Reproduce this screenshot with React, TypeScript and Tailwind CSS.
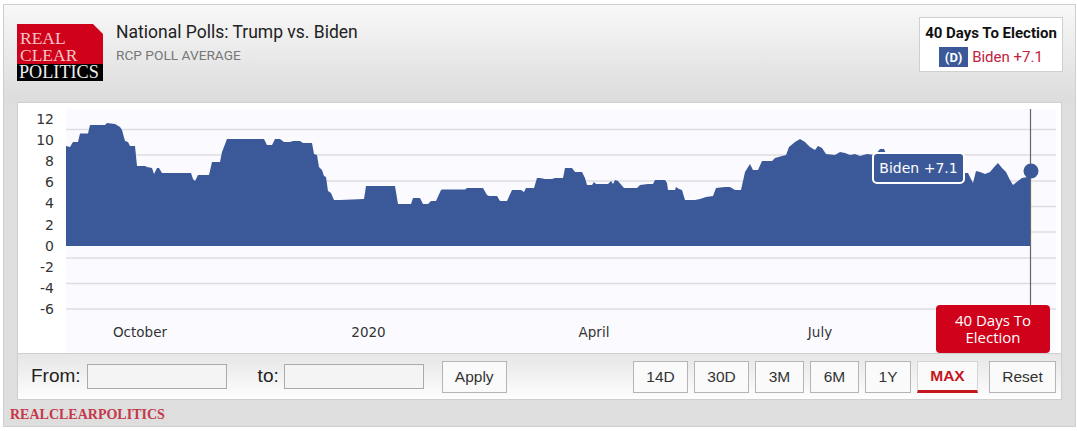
const AREA = "66,146 70,147 73,142 78,142 80,133.5 88,133.5 90,125 105,125 107,123 115,124 120,127 122,130 125,141 128,142 130,146 135,146 137,166 145,166 147,167 152,168 154,174 157,168 159,168 162,173 191,173 193,179 195,181 198,175 209,175 212,162 220,162 222,152 227,139 264,139 267,145 272,145 275,139 280,139 284,142 290,142 293,141 300,141 303,143 312,143 314,154 317,155 319,167 322,170 324,176 326,177 328,191 331,193 334,200 340,200 364,199 366,186 395,186 398,204 411,204 413,198 420,198 423,204 428,204 431,201 436,201 441,190 442,189.5 465,189.5 467,188 483,188 487,195 489,196 497,196 500,201 507,201 512,190 521,190 524,192 526,188 534,188 537,178 540,178 545,179 552,179 555,178 563,178 565,168 572,168 575,172 582,172 585,178 587,185 592,185 594,182 596,184 608,184 611,181 613,184 615,180 618,181 624,188 637,188 640,185 648,184 653,184 655,180 665,180 667,183 668,190 675,190 676,187 679,189 682,190 685,200 695,200 700,199 706,197 713,196 716,188 725,187 730,187 735,190 741,190 745,172 750,164 753,170 758,170 762,161 772,161 775,158 782,156 786,155 789,147 795,142 800,139 805,142 810,147 815,150 818,146 822,148 826,154 835,155 840,152 845,153 850,155 855,154 860,156 867,154 875,155 880,149 884,149 887,156 960,173 968,173 973,183 976,171 980,172 985,174 990,172 995,166 998,163 1002,168 1006,172 1010,180 1013,185 1018,181 1022,178 1028,177 1030,171 1030,246 66,246";

const GRID = [129.5, 155, 181, 206.5, 232, 258, 283.5, 309];
const Y_LABELS: [string, number][] = [["12", 124], ["10", 145], ["8", 166], ["6", 187], ["4", 208], ["2", 230], ["0", 251], ["-2", 272], ["-4", 293], ["-6", 314]];
const X_LABELS: [string, number][] = [["October", 140], ["2020", 368.5], ["April", 594], ["July", 820]];
const RANGES: [string, string][] = [["14D", "w-[55px]"], ["30D", "w-[55px]"], ["3M", "w-[49px]"], ["6M", "w-[49px]"], ["1Y", "w-[46px]"]];

function Logo() {
  return (
    <div className="w-[86px] h-[57px] flex flex-col font-['Liberation_Serif',serif] [clip-path:polygon(0_0,76px_0,86px_10px,86px_100%,0_100%)]">
      <div className="h-[40px] bg-[#d0021b] pl-[3px] pt-[6px] text-[17.5px] leading-[17px] text-[#f3c6c6]">
        <div>REAL</div>
        <div>CLEAR</div>
      </div>
      <div className="h-[17px] bg-black pl-[2px] text-[18.2px] leading-[17px] text-[#eeeeee] whitespace-nowrap">POLITICS</div>
    </div>
  );
}

function RangeButton({ label, width }: { label: string; width: string }) {
  return (
    <button className={`${width} h-[32px] border border-[#b5b5b5] bg-[#fafafa] text-[15.5px] text-[#333] font-['Liberation_Sans',sans-serif]`}>
      {label}
    </button>
  );
}

export default function App() {
  return (
    <div className="w-[1077px] h-[431px] bg-white pl-[3px] pt-[4px] font-['Roboto',sans-serif]">
      <div className="w-[1073px] h-[423px] border border-[#cfcfcf] flex flex-col bg-[#dedede]">
        <div className="h-[97px] shrink-0 bg-gradient-to-b from-[#f8f8f8] to-[#dcdcdc] flex items-start pl-[13px] pr-[12px]">
          <div className="mt-[19px]">
            <Logo />
          </div>
          <div className="ml-[13px] mt-[15px]">
            <div className="text-[17.5px] leading-[24px] text-[#222]">National Polls: Trump vs. Biden</div>
            <div className="text-[13.7px] leading-[20px] mt-[1px] text-[#777]">RCP POLL AVERAGE</div>
          </div>
          <div className="ml-auto mt-[12px] w-[144px] h-[55px] bg-white border border-[#cfcfcf] flex flex-col items-center pt-[4px]">
            <div className="text-[15px] leading-[22px] font-bold text-[#111] whitespace-nowrap">40 Days To Election</div>
            <div className="flex items-center gap-[4px] mt-[2px]">
              <span className="w-[29px] h-[20px] bg-[#3b5998] text-white text-[13px] font-bold flex items-center justify-center">(D)</span>
              <span className="text-[15px] text-[#c0213c]">Biden +7.1</span>
            </div>
          </div>
        </div>

        <div className="mx-[13px] w-[1045px] h-[298px] bg-white border border-[#cfcfcf] flex flex-col relative">
          <svg width="1043" height="250" viewBox="18 103 1043 250" className="block shrink-0">
            <rect x="66" y="109" width="990" height="244" fill="#fbfbff" />
            {GRID.map((y) => (
              <line key={y} x1="66" x2="1056" y1={y} y2={y} stroke="#dcdce2" strokeWidth="1.5" />
            ))}
            <polygon points={AREA} fill="#3b5998" />
            <line x1="1030.5" x2="1030.5" y1="109" y2="305" stroke="#666" strokeWidth="1.2" />
            <circle cx="1031" cy="171" r="7.5" fill="#3b5998" />
            {Y_LABELS.map(([t, y]) => (
              <text key={t} x="54" y={y} textAnchor="end" fontFamily="'DejaVu Sans', sans-serif" fontSize="14" fill="#333">{t}</text>
            ))}
            {X_LABELS.map(([t, x]) => (
              <text key={t} x={x} y="337" textAnchor="middle" fontFamily="'DejaVu Sans', sans-serif" fontSize="13.5" fill="#333">{t}</text>
            ))}
          </svg>

          <div className="absolute left-[854px] top-[49px] w-[93px] h-[32px] rounded-[5px] border-2 border-white bg-[#3b5998] text-white text-[14px] font-['DejaVu_Sans',sans-serif] flex items-center justify-center whitespace-nowrap">
            Biden +7.1
          </div>
          <div className="absolute left-[918px] top-[202px] w-[114px] h-[48px] rounded-[4px] bg-[#d0021b] text-white text-[15px] leading-[17px] font-['Open_Sans',sans-serif] flex items-center justify-center text-center">
            40 Days To<br />Election
          </div>

          <div className="h-[46px] shrink-0 border-t border-[#cfcfcf] bg-gradient-to-b from-[#e6e6e6] to-[#fefefe] flex items-center pl-[13px] pr-[5px] font-['Liberation_Sans',sans-serif]">
            <span className="text-[19px] text-[#222]">From:</span>
            <div className="ml-[6px] w-[140px] h-[25px] border border-[#aaa] bg-[#f4f4f4]" />
            <span className="ml-[31px] text-[19px] text-[#222]">to:</span>
            <div className="ml-[5px] w-[140px] h-[25px] border border-[#aaa] bg-[#f4f4f4]" />
            <button className="ml-[18px] w-[65px] h-[32px] border border-[#b5b5b5] bg-[#fafafa] text-[15.5px] text-[#333]">Apply</button>
            <div className="ml-auto flex items-center gap-[6px]">
              {RANGES.map(([r, w]) => (
                <RangeButton key={r} label={r} width={w} />
              ))}
              <button className="w-[61px] h-[32px] border border-[#d5d5d5] border-b-[3px] border-b-[#c4161c] bg-[#fafafa] text-[15.5px] font-bold text-[#c4161c]">MAX</button>
              <button className="ml-[5px] w-[67px] h-[32px] border border-[#b5b5b5] bg-[#fafafa] text-[15.5px] text-[#333]">Reset</button>
            </div>
          </div>
        </div>

        <div className="pl-[6px] pt-[7px] text-[14px] leading-[15px] font-bold text-[#c4384a] font-['Liberation_Serif',serif] whitespace-nowrap">REALCLEARPOLITICS</div>
      </div>
    </div>
  );
}
